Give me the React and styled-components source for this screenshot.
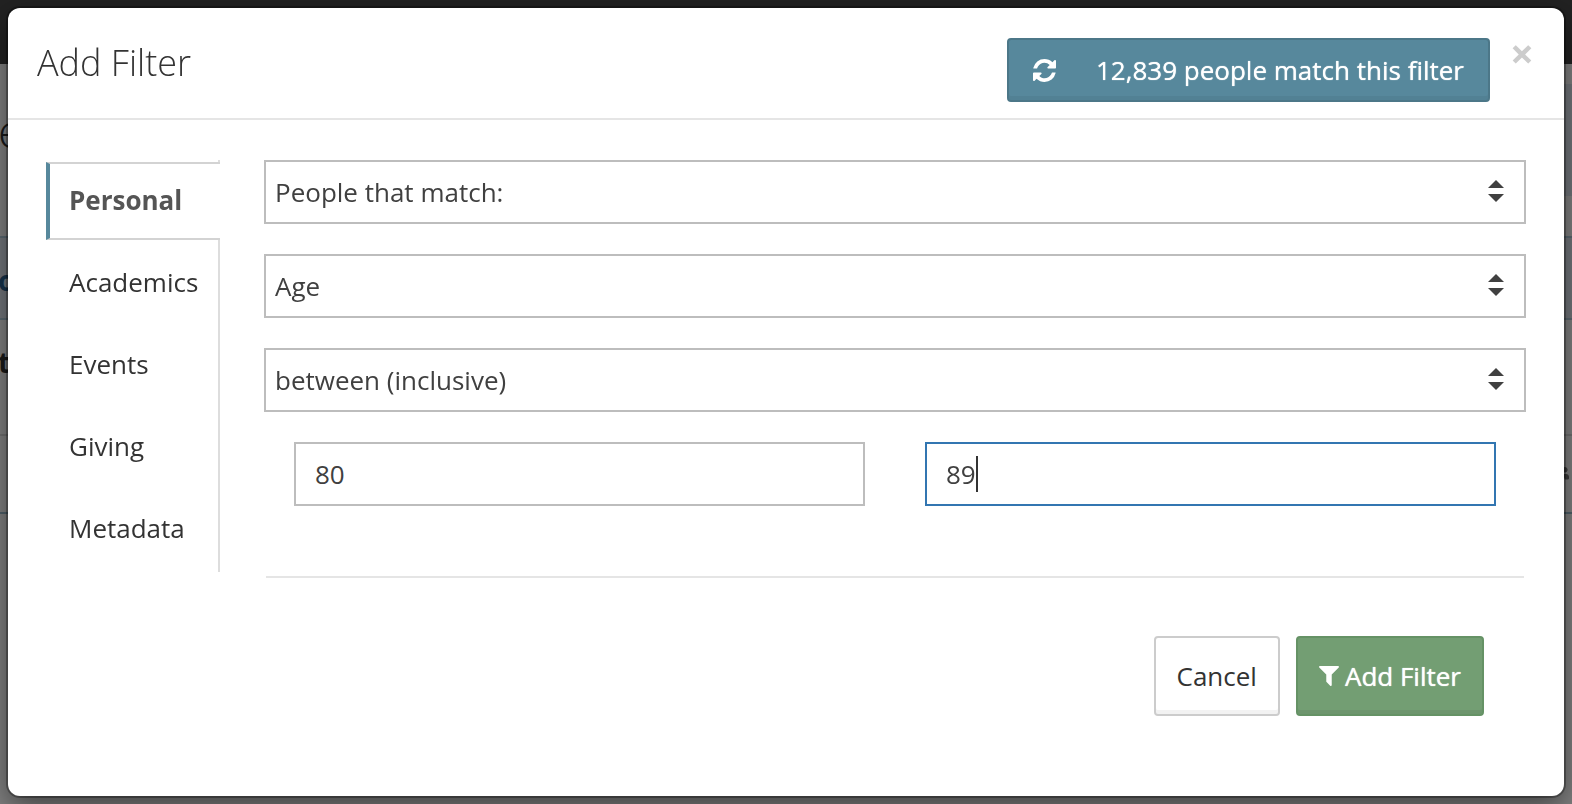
import React, { useState } from 'react';
import styled, { createGlobalStyle, css } from 'styled-components';
import { FaUsers } from 'react-icons/fa';

const GlobalStyle = createGlobalStyle`
  * {
    box-sizing: border-box;
  }

  body {
    margin: 0;
    overflow: hidden;
    background: #fff;
  }

  body,
  button,
  input,
  select {
    font-family: 'Open Sans', 'Noto Sans', sans-serif;
    font-size: 26px;
    line-height: 36px;
    color: #333;
  }
`;

const Page = styled.div`
  height: 100vh;
  overflow: hidden;
`;

const Navbar = styled.div`
  height: 64px;
  background: #444;
`;

const PageTop = styled.div`
  display: flex;
  justify-content: space-between;
  height: 172px;
  padding-top: 20px;
`;

const PageTitle = styled.div`
  padding-top: 14px;
  font-size: 46px;
  font-weight: 300;
  line-height: 64px;
  text-indent: -2px;
`;

const PageCount = styled.div`
  width: 480px;
  height: 112px;
  background: #e2eaf4;
`;

const PageRow = styled.div`
  display: flex;
  align-items: flex-start;
  justify-content: space-between;
  height: ${(props) => props.height}px;
  padding: 24px 3px 0 0;
  border-top: 2px solid ${(props) => props.line};
  background: ${(props) => props.fill || '#fff'};
  color: ${(props) => props.color || '#333'};
  font-size: 28px;
  font-weight: 700;
  text-indent: -2px;
`;

const Backdrop = styled.div`
  position: fixed;
  inset: 0;
  padding: 8px;
  overflow: auto;
  background: rgba(0, 0, 0, 0.5);
`;

const Modal = styled.div`
  border-radius: 12px;
  background: #fff;
  box-shadow: 0 0 0 2px rgba(0, 0, 0, 0.3), 0 10px 30px rgba(0, 0, 0, 0.5);
`;

const ModalHeader = styled.header`
  display: flex;
  align-items: flex-start;
  height: 112px;
  padding: 30px 34px 0 29px;
  border-bottom: 2px solid #e5e5e5;
`;

const Title = styled.h1`
  flex: 1;
  margin: 0;
  font-size: 36px;
  font-weight: 300;
  line-height: 50px;
`;

const Button = styled.button`
  display: inline-flex;
  align-items: center;
  justify-content: center;
  gap: 6px;
  height: 80px;
  padding: 0 21px;
  border: 2px solid #ccc;
  border-radius: 4px;
  background: #fff;
  box-shadow: inset 0 -4px 0 rgba(0, 0, 0, 0.05);
  white-space: nowrap;
  cursor: pointer;

  ${(props) =>
    props.$kind === 'success' &&
    css`
      border-color: #659265;
      background: #739e73;
      color: #fff;
      text-shadow: 0 0 1px #fff;
    `}

  ${(props) =>
    props.$kind === 'info' &&
    css`
      gap: 40px;
      height: 64px;
      padding: 0 24px;
      border-color: #4c7788;
      background: #57889c;
      color: #fff;
      text-shadow: 0 0 1px #fff;
    `}
`;

const CloseButton = styled.button`
  width: 20px;
  height: 30px;
  margin-left: 20px;
  padding: 0;
  border: 0;
  background: none;
  color: #ccc;
  font-size: 42px;
  font-weight: 700;
  line-height: 30px;
  cursor: pointer;
`;

const ModalBody = styled.div`
  display: flex;
  align-items: flex-start;
  gap: 44px;
  padding: 40px 38px 80px;
`;

const Tabs = styled.nav`
  display: flex;
  flex-direction: column;
  gap: 4px;
  width: 174px;
  padding: 2px 0 4px;
  border-right: 2px solid #ddd;
`;

const Tab = styled.button`
  height: 78px;
  padding: 0 0 2px 19px;
  border: 2px solid transparent;
  border-left-width: 4px;
  background: none;
  text-align: left;
  cursor: pointer;

  ${(props) =>
    props.$active &&
    css`
      margin-right: -2px;
      border-color: #d3d3d3 #fff #d3d3d3 #57889c;
      border-width: 2px 0 2px 4px;
      background: #fff;
      color: #555;
      font-weight: 700;
    `}
`;

const Form = styled.form`
  flex: 1;
  display: flex;
  flex-direction: column;
  gap: 30px;
`;

const SelectBox = styled.label`
  display: flex;
  align-items: center;
  height: 64px;
  padding-right: 20px;
  border: 2px solid #bdbdbd;
  background: #fff;

  svg {
    flex: none;
    margin-bottom: 2px;
    pointer-events: none;
    fill: #404040;
  }
`;

const Select = styled.select`
  flex: 1;
  height: 60px;
  padding: 0 0 0 9px;
  border: 0;
  outline: 0;
  background: none;
  color: #404040;
  appearance: none;
`;

const Range = styled.div`
  display: grid;
  grid-template-columns: 1fr 1fr;
  gap: 60px;
  padding: 0 30px;
`;

const InputBox = styled.div`
  position: relative;
`;

const Input = styled.input`
  display: block;
  width: 100%;
  height: 64px;
  padding: 0 19px;
  border: 2px solid ${(props) => (props.$focused ? '#3276b1' : '#bdbdbd')};
  border-radius: 0;
  outline: 0;
  background: #fff;
  color: #404040;
  caret-color: transparent;
`;

const Caret = styled.span`
  position: absolute;
  top: 14px;
  width: 2px;
  height: 36px;
  background: #333;
`;

const Divider = styled.hr`
  width: calc(100% - 4px);
  margin: 40px 2px 28px;
  border: 0;
  border-top: 2px solid #e5e5e5;
`;

const Actions = styled.div`
  display: flex;
  justify-content: flex-end;
  gap: 16px;
  padding-right: 42px;
`;

const RefreshIcon = () => (
  <svg width="23" height="23" viewBox="0 0 1536 1536" fill="currentColor" aria-hidden="true">
    <path d="M1511 928q0 5-1 7-64 268-268 434.5t-478 166.5q-146 0-282.5-55t-243.5-157l-129 129q-19 19-45 19t-45-19-19-45v-448q0-26 19-45t45-19h448q26 0 45 19t19 45-19 45l-137 137q71 66 161 102t187 36q134 0 250-65t186-179q11-17 53-117 8-23 30-23h192q13 0 22.5 9.5t9.5 22.5zm25-800v448q0 26-19 45t-45 19h-448q-26 0-45-19t-19-45 19-45l138-138q-148-137-349-137-134 0-250 65t-186 179q-11 17-53 117-8 23-30 23h-199q-13 0-22.5-9.5t-9.5-22.5v-7q65-268 270-434.5t480-166.5q146 0 284 55.5t245 156.5l130-129q19-19 45-19t45 19 19 45z" />
  </svg>
);

const FilterIcon = () => (
  <svg width="20" height="20" viewBox="192 256 1408 1408" fill="currentColor" aria-hidden="true">
    <path d="M1595 295q17 41-14 70l-493 493v742q0 42-39 59-13 5-25 5-27 0-45-19l-256-256q-19-19-19-45v-486l-493-493q-31-29-14-70 17-39 59-39h1280q42 0 59 39z" />
  </svg>
);

const SortIcon = () => (
  <svg width="16" height="22" viewBox="0 0 16 22" aria-hidden="true">
    <path d="M8 0l8 8H0zM8 22l8-8H0z" />
  </svg>
);

const Dropdown = ({ label, options }) => (
  <SelectBox>
    <Select aria-label={label}>
      {options.map((option) => (
        <option key={option}>{option}</option>
      ))}
    </Select>
    <SortIcon />
  </SelectBox>
);

const NumberField = ({ label, initialValue, autoFocus }) => {
  const [value, setValue] = useState(initialValue);
  const [focused, setFocused] = useState(Boolean(autoFocus));

  return (
    <InputBox>
      <Input
        type="text"
        aria-label={label}
        value={value}
        autoFocus={autoFocus}
        $focused={focused}
        onChange={(e) => setValue(e.target.value)}
        onFocus={() => setFocused(true)}
        onBlur={() => setFocused(false)}
      />
      {focused && <Caret style={{ left: `calc(21px + ${value.length}ch)` }} />}
    </InputBox>
  );
};

const tabs = ['Personal', 'Academics', 'Events', 'Giving', 'Metadata'];

const App = () => {
  const [activeTab, setActiveTab] = useState('Personal');

  return (
    <>
      <GlobalStyle />
      <Page aria-hidden="true">
        <Navbar />
        <PageTop>
          <PageTitle>e</PageTitle>
          <PageCount />
        </PageTop>
        <PageRow height={82} line="#b4d0e0" fill="#e2eaf4" color="#2a6496">
          o
        </PageRow>
        <PageRow height={116} line="#b4d0e0">
          t
        </PageRow>
        <PageRow height={78} line="#ddd" color="#777">
          <span />
          <FaUsers />
        </PageRow>
        <PageRow height={300} line="#9fc0d2" />
      </Page>
      <Backdrop>
        <Modal role="dialog" aria-labelledby="filter-title">
          <ModalHeader>
            <Title id="filter-title">Add Filter</Title>
            <Button type="button" $kind="info">
              <RefreshIcon />
              12,839 people match this filter
            </Button>
            <CloseButton type="button" aria-label="Close">
              ×
            </CloseButton>
          </ModalHeader>
          <ModalBody>
            <Tabs>
              {tabs.map((tab) => (
                <Tab
                  key={tab}
                  type="button"
                  $active={tab === activeTab}
                  onClick={() => setActiveTab(tab)}
                >
                  {tab}
                </Tab>
              ))}
            </Tabs>
            <Form onSubmit={(e) => e.preventDefault()}>
              <Dropdown label="Match" options={['People that match:', 'People that do not match:']} />
              <Dropdown label="Field" options={['Age', 'Gender', 'Birthday']} />
              <Dropdown label="Comparison" options={['between (inclusive)', 'is', 'is not']} />
              <Range>
                <NumberField label="From" initialValue="80" />
                <NumberField label="To" initialValue="89" autoFocus />
              </Range>
              <Divider />
              <Actions>
                <Button type="button">Cancel</Button>
                <Button type="submit" $kind="success">
                  <FilterIcon />
                  Add Filter
                </Button>
              </Actions>
            </Form>
          </ModalBody>
        </Modal>
      </Backdrop>
    </>
  );
};

export default App;
